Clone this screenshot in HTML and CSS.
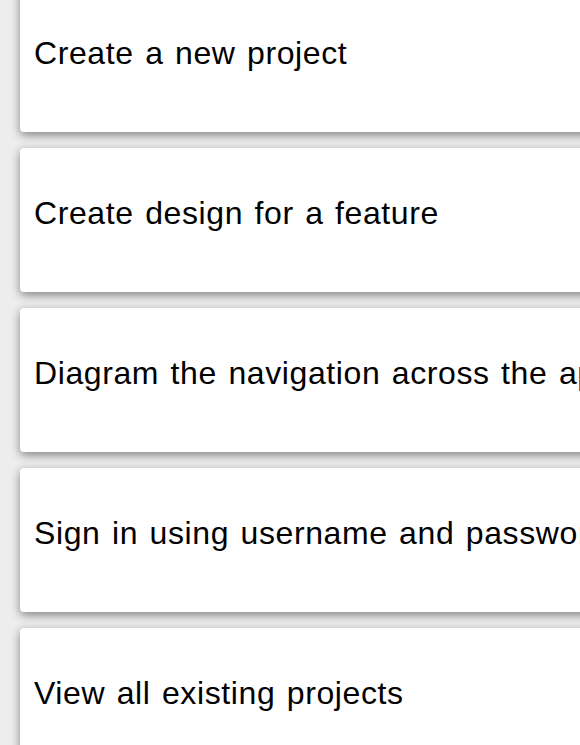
FILE: index.html
```html
<!DOCTYPE html>
<html>
<head>
<meta charset="utf-8">
<link rel="stylesheet" href="styles.css">
</head>
<body>
<ul class="list">
  <li class="card">Create a new project</li>
  <li class="card">Create design for a feature</li>
  <li class="card">Diagram the navigation across the app</li>
  <li class="card">Sign in using username and password</li>
  <li class="card">View all existing projects</li>
</ul>
</body>
</html>
```
FILE: styles.css
```css
html, body {
  margin: 0;
  padding: 0;
  background: #ededed;
  overflow: hidden;
}
.list {
  list-style: none;
  margin: -12px 0 0 0;
  padding: 0 0 0 20px;
  display: flex;
  flex-direction: column;
  gap: 16px;
}
.card {
  width: 620px;
  height: 144px;
  box-sizing: border-box;
  padding: 47px 0 0 14px;
  background: #fff;
  border-radius: 4px;
  box-shadow: 0 3px 10px rgba(0, 0, 0, 0.45);
  font-family: "Liberation Sans", Arial, sans-serif;
  font-size: 32px;
  line-height: 36px;
  letter-spacing: 0.6px;
  word-spacing: 2px;
  color: #000;
  white-space: nowrap;
}
```
